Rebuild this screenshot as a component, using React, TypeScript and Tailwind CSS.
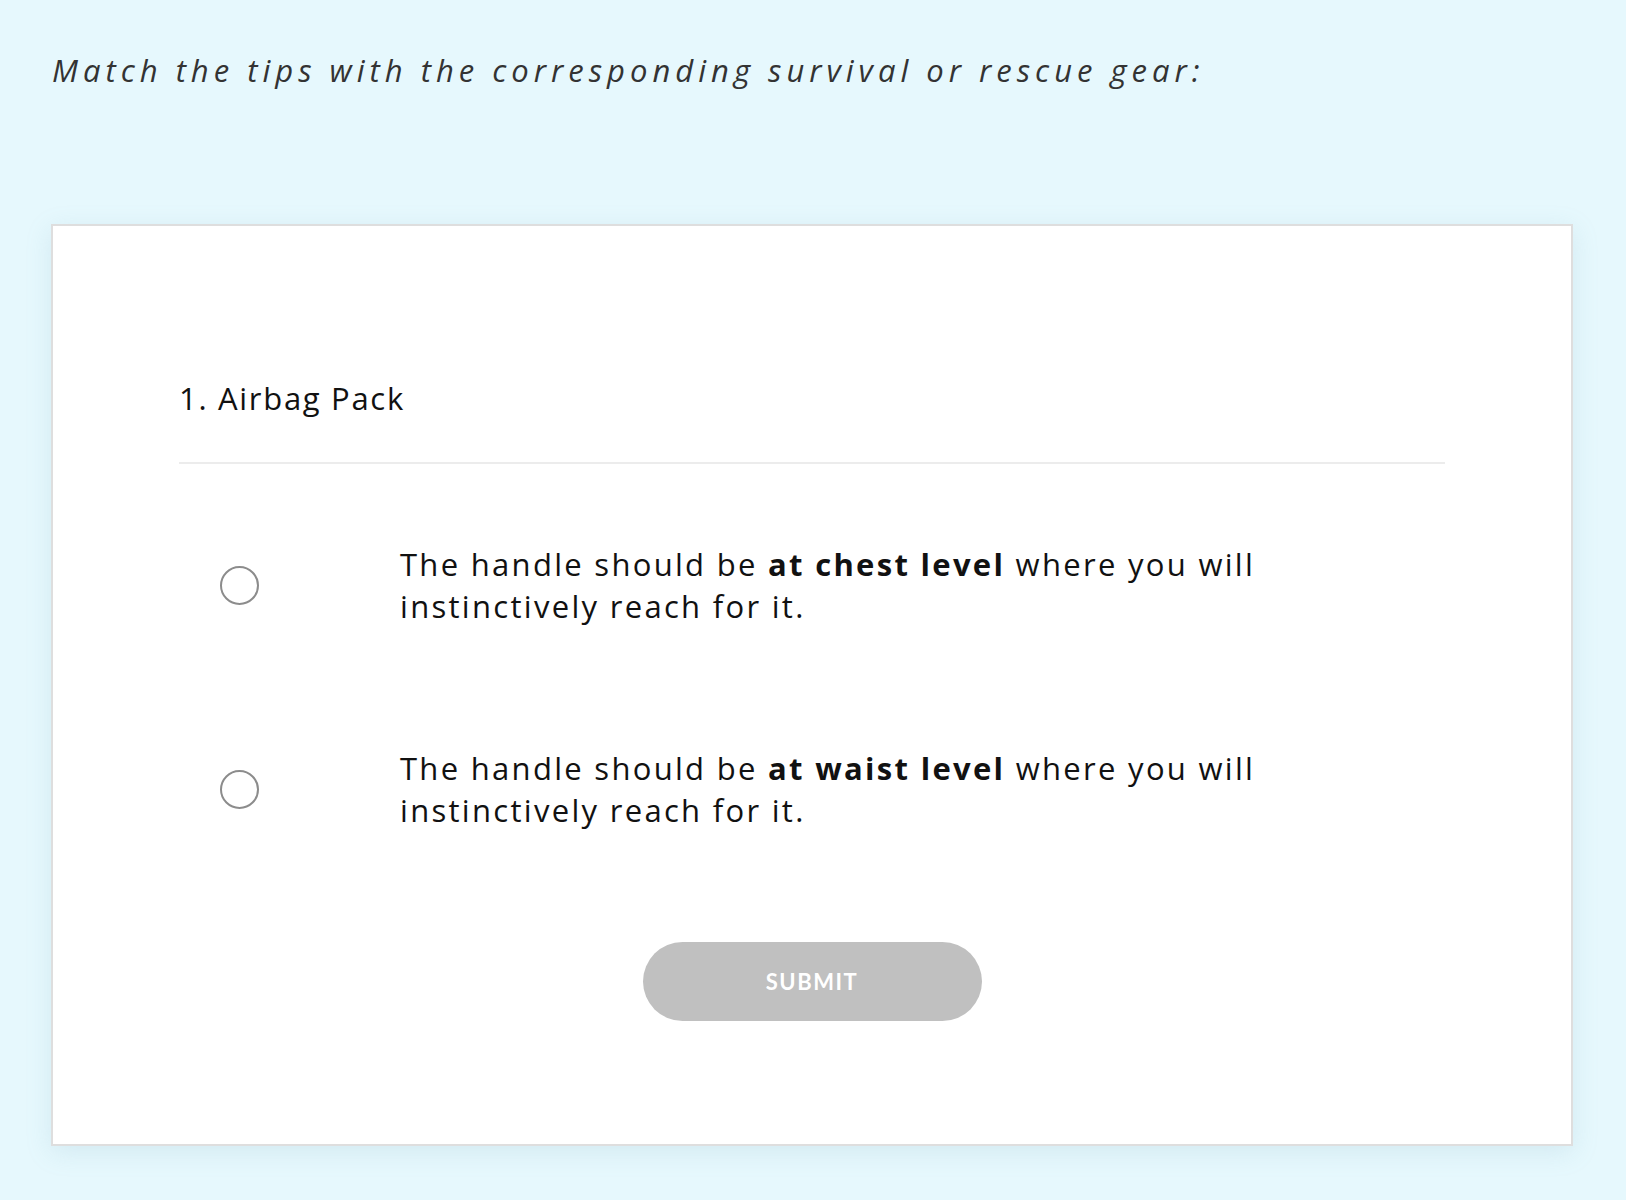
import React from "react";

function Option({ bold }: { bold: string }) {
  return (
    <div className="flex items-center">
      <div className="w-[41px] shrink-0" />
      <div className="w-[39px] h-[39px] rounded-full border-2 border-[#8c8c8c] bg-white shrink-0" />
      <div className="w-[141px] shrink-0" />
      <div
        className="text-[31px] leading-[42px] text-[#111] tracking-[2.3px]"
        style={{ fontFamily: '"Open Sans", sans-serif' }}
      >
        The handle should be <b className="font-bold">{bold}</b> where you will
        <br />
        instinctively reach for it.
      </div>
    </div>
  );
}

export default function App() {
  return (
    <div className="min-h-[1200px] w-full bg-[#e6f8fd] pl-[51px] pr-[53px] pt-[48px] pb-[55px]">
      <div
        className="text-[31px] leading-[44px] italic text-[#333333] tracking-[5px] pl-[1px] whitespace-nowrap"
        style={{ fontFamily: '"Open Sans", sans-serif' }}
      >
        Match the tips with the corresponding survival or rescue gear:
      </div>
      <div className="mt-[132px] border-2 border-[#dedede] bg-white shadow-[0_6px_24px_rgba(120,170,190,0.18)] px-[126px] pt-[152px] pb-[123px]">
        <div
          className="text-[31px] leading-[40px] text-[#111] tracking-[1.7px]"
          style={{ fontFamily: '"Open Sans", sans-serif' }}
        >
          1. Airbag Pack
        </div>
        <div className="mt-[44px] h-[2px] bg-[#ececec]" />
        <div className="mt-[79px]">
          <Option bold="at chest level" />
        </div>
        <div className="mt-[120px]">
          <Option bold="at waist level" />
        </div>
        <div className="mt-[111px] flex justify-center">
          <button
            className="w-[339px] h-[79px] rounded-full bg-[#c0c0c0] text-white text-[22px] font-bold tracking-[1.5px]"
            style={{ fontFamily: 'Lato, sans-serif' }}
          >
            SUBMIT
          </button>
        </div>
      </div>
    </div>
  );
}
